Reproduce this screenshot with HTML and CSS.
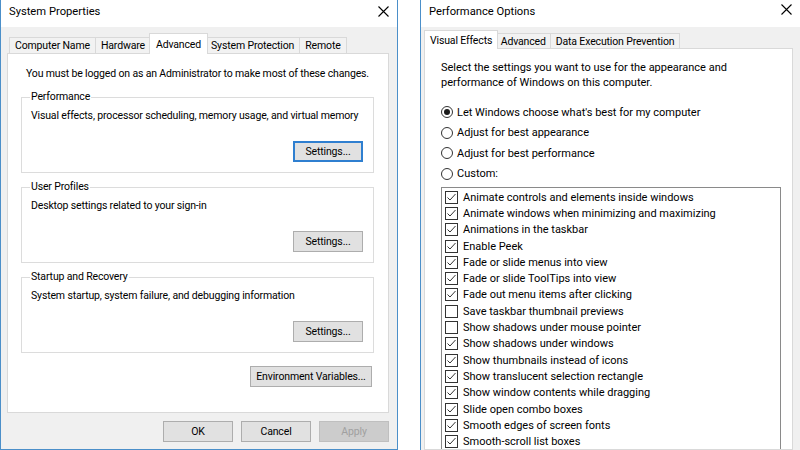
FILE: index.html
```html
<!DOCTYPE html>
<html lang="en">
<head>
  <meta charset="UTF-8">
  <meta name="viewport" content="width=device-width, initial-scale=1.0">
  <title>System Properties</title>
  <link rel="stylesheet" href="styles.css">
</head>
<body>
  <div class="desktop">

    <!-- System Properties dialog -->
    <div class="window sysprops">
      <div class="titlebar">
        <span class="title">System Properties</span>
        <svg class="close" width="11" height="11" viewBox="0 0 11 11">
          <path d="M0.5 0.5L10.5 10.5M10.5 0.5L0.5 10.5" stroke="#000" stroke-width="1.1"/>
        </svg>
      </div>
      <div class="dialog">
        <div class="tabs">
          <div class="tab">Computer Name</div>
          <div class="tab">Hardware</div>
          <div class="tab active">Advanced</div>
          <div class="tab">System Protection</div>
          <div class="tab">Remote</div>
        </div>
        <div class="pane">
          <p class="notice">You must be logged on as an Administrator to make most of these changes.</p>

          <fieldset class="group">
            <legend>Performance</legend>
            <p>Visual effects, processor scheduling, memory usage, and virtual memory</p>
            <div class="group-actions">
              <button class="btn default">Settings...</button>
            </div>
          </fieldset>

          <fieldset class="group">
            <legend>User Profiles</legend>
            <p>Desktop settings related to your sign-in</p>
            <div class="group-actions">
              <button class="btn">Settings...</button>
            </div>
          </fieldset>

          <fieldset class="group">
            <legend>Startup and Recovery</legend>
            <p>System startup, system failure, and debugging information</p>
            <div class="group-actions">
              <button class="btn">Settings...</button>
            </div>
          </fieldset>

          <div class="env-row">
            <button class="btn wide">Environment Variables...</button>
          </div>
        </div>
        <div class="footer">
          <button class="btn">OK</button>
          <button class="btn">Cancel</button>
          <button class="btn" disabled>Apply</button>
        </div>
      </div>
    </div>

    <!-- Performance Options dialog -->
    <div class="window perf">
      <div class="titlebar">
        <span class="title">Performance Options</span>
        <svg class="close" width="11" height="11" viewBox="0 0 11 11">
          <path d="M0.5 0.5L10.5 10.5M10.5 0.5L0.5 10.5" stroke="#000" stroke-width="1.1"/>
        </svg>
      </div>
      <div class="dialog">
        <div class="tabs">
          <div class="tab active">Visual Effects</div>
          <div class="tab">Advanced</div>
          <div class="tab">Data Execution Prevention</div>
        </div>
        <div class="pane">
          <p class="intro">Select the settings you want to use for the appearance and<br>performance of Windows on this computer.</p>

          <div class="options">
            <label class="radio-row"><span class="radio checked"></span>Let Windows choose what's best for my computer</label>
            <label class="radio-row"><span class="radio"></span>Adjust for best appearance</label>
            <label class="radio-row"><span class="radio"></span>Adjust for best performance</label>
            <label class="radio-row"><span class="radio"></span>Custom:</label>
          </div>

          <ul class="effects">
            <li><span class="check on"></span>Animate controls and elements inside windows</li>
            <li><span class="check on"></span>Animate windows when minimizing and maximizing</li>
            <li><span class="check on"></span>Animations in the taskbar</li>
            <li><span class="check on"></span>Enable Peek</li>
            <li><span class="check on"></span>Fade or slide menus into view</li>
            <li><span class="check on"></span>Fade or slide ToolTips into view</li>
            <li><span class="check on"></span>Fade out menu items after clicking</li>
            <li><span class="check"></span>Save taskbar thumbnail previews</li>
            <li><span class="check"></span>Show shadows under mouse pointer</li>
            <li><span class="check on"></span>Show shadows under windows</li>
            <li><span class="check on"></span>Show thumbnails instead of icons</li>
            <li><span class="check on"></span>Show translucent selection rectangle</li>
            <li><span class="check on"></span>Show window contents while dragging</li>
            <li><span class="check on"></span>Slide open combo boxes</li>
            <li><span class="check on"></span>Smooth edges of screen fonts</li>
            <li><span class="check on"></span>Smooth-scroll list boxes</li>
          </ul>
        </div>
      </div>
    </div>

  </div>
</body>
</html>
```

FILE: styles.css
```css
* {
  box-sizing: border-box;
}
body {
  margin: 0;
  background: #fff;
  font-family: Roboto, "Noto Sans", sans-serif;
  font-size: 10.5px;
  letter-spacing: -0.15px;
  color: #000;
}
p {
  margin: 0;
}
.desktop {
  display: flex;
  gap: 22px;
  height: 450px;
  overflow: hidden;
}

/* window frame */
.window {
  display: flex;
  flex-direction: column;
  height: 450px;
  border: 1px solid #4b8fc9;
  border-top: none;
}
.sysprops {
  width: 398px;
  flex-shrink: 0;
}
.perf {
  flex: 1;
  min-width: 0;
  border-right: none;
  border-bottom: none;
}
.titlebar {
  display: flex;
  align-items: flex-start;
  flex-shrink: 0;
  height: 27px;
  padding: 4px 8px 0 8px;
  background: #fff;
}
.title {
  font-size: 11.2px;
  letter-spacing: 0;
  line-height: 16px;
}
.close {
  margin-left: auto;
  margin-top: 2px;
}
.perf .close {
  margin-top: 0;
}
.dialog {
  flex: 1;
  min-height: 0;
  display: flex;
  flex-direction: column;
  background: #f0f0f0;
  padding: 6px 8px 0 6px;
}
.perf .dialog {
  padding: 3px 7px 0 3px;
}

/* tab strip */
.tabs {
  display: flex;
  align-items: flex-end;
  flex-shrink: 0;
  height: 20px;
  padding-left: 3px;
}
.tab {
  display: flex;
  align-items: center;
  height: 16px;
  padding: 0 5px;
  margin-left: -1px;
  background: #f2f2f2;
  border: 1px solid #d9d9d9;
  border-bottom: none;
  white-space: nowrap;
}
.tab.active {
  position: relative;
  z-index: 1;
  height: 21px;
  margin: 0 -2px -1px -2px;
  padding: 0 6px;
  background: #fff;
}
.perf .tabs {
  height: 18px;
  padding-left: 2px;
}
.perf .tab {
  height: 15px;
  padding: 0 4.5px;
}
.perf .tab.active {
  height: 19px;
  padding: 0 5px;
}
.pane {
  flex-shrink: 0;
  background: #fff;
  border: 1px solid #d9d9d9;
}

/* System Properties > Advanced */
.sysprops .pane {
  height: 360px;
  padding: 12px 14px 0 13px;
}
.notice {
  line-height: 16px;
  padding-left: 5px;
  white-space: nowrap;
}
.group {
  margin: 6px 0 0 0;
  padding: 0 10px 10px 9px;
  border: 1px solid #dcdcdc;
}
.notice + .group {
  margin-top: 7px;
}
.group legend {
  line-height: 16px;
  padding: 0 1px;
  margin-left: -1px;
}
.group p {
  line-height: 16px;
  margin-top: 3px;
  white-space: nowrap;
}
.group-actions {
  display: flex;
  justify-content: flex-end;
  margin-top: 17px;
}
.env-row {
  display: flex;
  justify-content: flex-end;
  margin-top: 13px;
  padding-right: 2px;
}
.footer {
  display: flex;
  justify-content: flex-end;
  flex-shrink: 0;
  gap: 8px;
  padding-top: 8px;
}

/* push buttons */
.btn {
  width: 70px;
  height: 21px;
  padding: 0;
  font: inherit;
  letter-spacing: inherit;
  white-space: nowrap;
  color: #000;
  background: #e1e1e1;
  border: 1px solid #adadad;
}
.btn.default {
  border-color: #2f7fd0;
  box-shadow: inset 0 0 0 1px #2f7fd0;
}
.btn.wide {
  width: 122px;
}
.btn:disabled {
  color: #a0a0a0;
  background: #cccccc;
  border-color: #bfbfbf;
}

/* Performance Options > Visual Effects */
.perf .pane {
  flex: 1;
  min-height: 0;
  overflow: hidden;
  padding: 11px 10px 0 16px;
  font-size: 11px;
  letter-spacing: 0;
}
.intro {
  line-height: 15px;
  white-space: nowrap;
}
.options {
  margin-top: 12px;
}
.radio-row {
  display: flex;
  align-items: center;
  height: 20.5px;
}
.radio {
  width: 12px;
  height: 12px;
  margin-right: 4px;
  border: 1px solid #333;
  border-radius: 50%;
  display: flex;
  align-items: center;
  justify-content: center;
}
.radio.checked::after {
  content: "";
  width: 6px;
  height: 6px;
  border-radius: 50%;
  background: #1a1a1a;
}
.effects {
  list-style: none;
  margin: 3px 0 0 0;
  padding: 1px 0 0 3px;
  width: 340px;
  border: 1px solid #8a8a8a;
  border-bottom: none;
}
.effects li {
  display: flex;
  align-items: center;
  height: 16.3px;
  white-space: nowrap;
}
.check {
  width: 13px;
  height: 13px;
  margin-right: 5px;
  border: 1px solid #333;
  background: #fff;
  flex-shrink: 0;
}
.check.on {
  background: #fff url("data:image/svg+xml,%3Csvg xmlns='http://www.w3.org/2000/svg' width='11' height='11' viewBox='0 0 11 11'%3E%3Cpath d='M1.5 5.5L4 8L9.5 2' fill='none' stroke='%23333' stroke-width='1'/%3E%3C/svg%3E") no-repeat center;
}
```
